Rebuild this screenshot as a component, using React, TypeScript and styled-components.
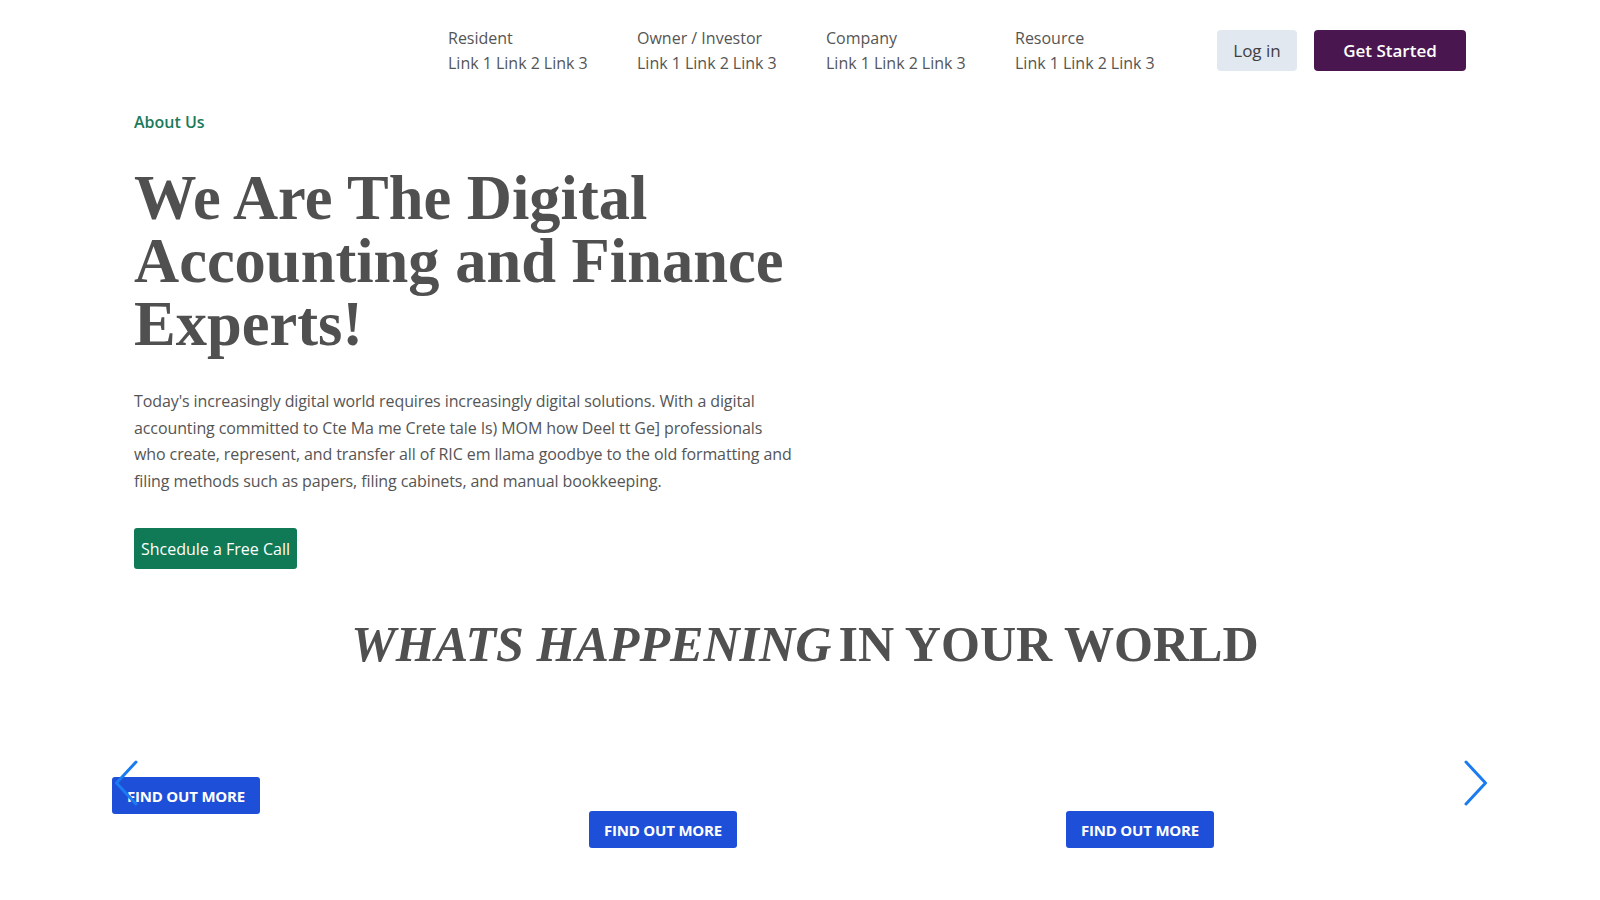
import React from "react";
import styled, { createGlobalStyle } from "styled-components";

const GlobalStyle = createGlobalStyle`
  * { box-sizing: border-box; }
  body {
    margin: 0;
    background: #ffffff;
    font-family: "Open Sans", "Noto Sans", "Liberation Sans", sans-serif;
    color: #555555;
  }
`;

const Page = styled.div`
  width: 1600px;
  min-height: 900px;
  overflow: hidden;
`;

const Header = styled.header`
  display: flex;
  justify-content: flex-end;
  align-items: center;
  padding: 26px 134px 0;
`;

const Nav = styled.nav`
  display: grid;
  grid-template-columns: repeat(4, 189px);
  margin-right: 13px;
`;

const NavColumn = styled.div`
  display: flex;
  flex-direction: column;
`;

const NavLabel = styled.span`
  font-size: 16px;
  line-height: 25px;
  color: #555555;
  white-space: nowrap;
`;

const NavLinks = styled.div`
  display: flex;
  gap: 4px;
  font-size: 16px;
  line-height: 25px;
  color: #555555;
  white-space: nowrap;
`;

const Actions = styled.div`
  display: flex;
  gap: 17px;
  margin-bottom: 2px;
`;

const HeaderButton = styled.button<{ $primary?: boolean }>`
  height: 41px;
  width: ${(p) => (p.$primary ? "152px" : "80px")};
  border: none;
  border-radius: 4px;
  background: ${(p) => (p.$primary ? "#4a1650" : "#e2e8f0")};
  color: ${(p) => (p.$primary ? "#ffffff" : "#3f3f3f")};
  font-family: inherit;
  font-size: 17px;
  font-weight: ${(p) => (p.$primary ? 600 : 400)};
  cursor: pointer;
`;

const Hero = styled.section`
  padding: 34px 134px 0;
`;

const HeroColumn = styled.div`
  width: 666px;
`;

const Eyebrow = styled.div`
  font-size: 16px;
  line-height: 24px;
  font-weight: 600;
  color: #1a7a5a;
`;

const Heading = styled.h1`
  margin: 33px 0 0;
  font-family: "Liberation Serif", "Times New Roman", serif;
  font-weight: 700;
  font-size: 62.5px;
  line-height: 63px;
  color: #505050;
`;

const Lead = styled.p`
  margin: 32px 0 0;
  font-size: 16px;
  line-height: 26.5px;
  letter-spacing: -0.1px;
  color: #555555;
  white-space: nowrap;
`;

const CallButton = styled.button`
  margin-top: 34px;
  height: 41px;
  width: 163px;
  border: none;
  border-radius: 3px;
  background: #0f7a55;
  color: #ffffff;
  font-family: inherit;
  font-size: 16px;
  cursor: pointer;
`;

const SectionTitle = styled.h2`
  margin: 45px 0 0;
  text-align: center;
  padding-left: 10px;
  font-family: "Liberation Serif", "Times New Roman", serif;
  font-weight: 700;
  font-size: 50.1px;
  line-height: 60px;
  color: #505050;
  em {
    font-style: italic;
  }
`;

const TitleRest = styled.span`
  margin-left: 7px;
`;

const Carousel = styled.section`
  position: relative;
  margin-top: 40px;
  height: 138px;
`;

const Track = styled.div`
  display: grid;
  grid-template-columns: repeat(3, 477px);
  height: 100%;
  padding-left: 112px;
`;

const Slide = styled.div<{ $raised?: boolean }>`
  display: flex;
  flex-direction: column;
  justify-content: flex-end;
  align-items: flex-start;
  padding-bottom: ${(p) => (p.$raised ? "38px" : "4px")};
`;

const MoreButton = styled.button`
  width: 148px;
  height: 37px;
  border: none;
  border-radius: 3px;
  background: #1e4fd8;
  color: #ffffff;
  font-family: inherit;
  font-size: 15px;
  font-weight: 700;
  letter-spacing: -0.2px;
  text-transform: uppercase;
  cursor: pointer;
`;

const Arrow = styled.button<{ $side: "left" | "right" }>`
  position: absolute;
  top: 50%;
  ${(p) => (p.$side === "left" ? "left: 114px;" : "right: 112px;")}
  transform: translateY(-50%);
  width: 24px;
  height: 46px;
  padding: 0;
  border: none;
  background: transparent;
  cursor: pointer;
  z-index: 2;
  svg {
    display: block;
  }
`;

const Chevron: React.FC<{ dir: "left" | "right" }> = ({ dir }) => (
  <svg width="24" height="46" viewBox="0 0 24 46" fill="none">
    <path
      d={dir === "left" ? "M22 2 L2.5 23 L22 44" : "M2 2 L21.5 23 L2 44"}
      stroke="#1a7cf0"
      strokeWidth="3"
      strokeLinecap="round"
      strokeLinejoin="round"
    />
  </svg>
);

const navItems = ["Resident", "Owner / Investor", "Company", "Resource"];

export default function App() {
  return (
    <Page>
      <GlobalStyle />
      <Header>
        <Nav>
          {navItems.map((label) => (
            <NavColumn key={label}>
              <NavLabel>{label}</NavLabel>
              <NavLinks>
                <span>Link 1</span>
                <span>Link 2</span>
                <span>Link 3</span>
              </NavLinks>
            </NavColumn>
          ))}
        </Nav>
        <Actions>
          <HeaderButton>Log in</HeaderButton>
          <HeaderButton $primary>Get Started</HeaderButton>
        </Actions>
      </Header>

      <Hero>
        <HeroColumn>
          <Eyebrow>About Us</Eyebrow>
          <Heading>
            We Are The Digital Accounting and Finance Experts!
          </Heading>
          <Lead>
            Today's increasingly digital world requires increasingly digital solutions. With a digital
            <br />
            accounting committed to Cte Ma me Crete tale Is) MOM how Deel tt Ge] professionals
            <br />
            who create, represent, and transfer all of RIC em llama goodbye to the old formatting and
            <br />
            filing methods such as papers, filing cabinets, and manual bookkeeping.
          </Lead>
          <CallButton>Shcedule a Free Call</CallButton>
        </HeroColumn>
      </Hero>

      <SectionTitle>
        <em>WHATS HAPPENING</em>
        <TitleRest>IN YOUR WORLD</TitleRest>
      </SectionTitle>

      <Carousel>
        <Arrow $side="left" aria-label="Previous">
          <Chevron dir="left" />
        </Arrow>
        <Track>
          <Slide $raised>
            <MoreButton>Find out more</MoreButton>
          </Slide>
          <Slide>
            <MoreButton>Find out more</MoreButton>
          </Slide>
          <Slide>
            <MoreButton>Find out more</MoreButton>
          </Slide>
        </Track>
        <Arrow $side="right" aria-label="Next">
          <Chevron dir="right" />
        </Arrow>
      </Carousel>
    </Page>
  );
}
